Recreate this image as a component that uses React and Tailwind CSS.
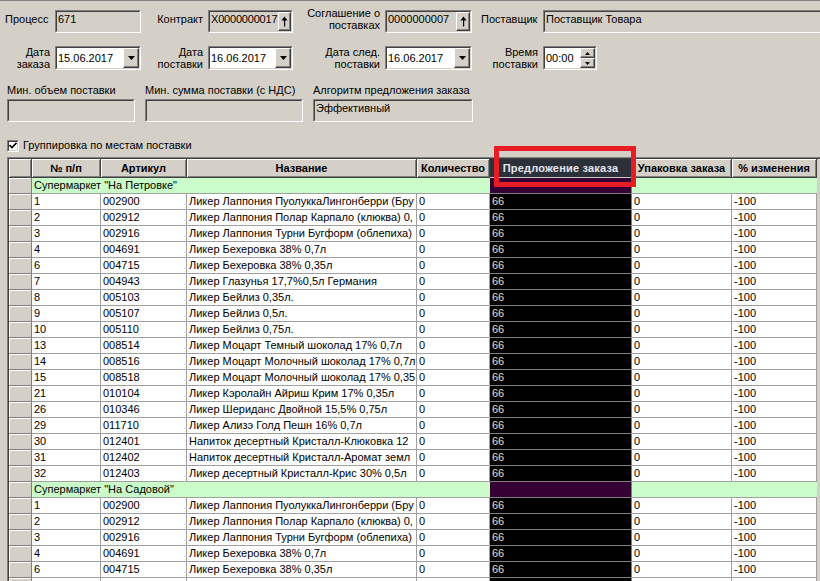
import React from "react";

const FONT = "font-['Liberation_Sans',Arial,sans-serif]";

const group1 = [
  ["1", "002900", "Ликер Лаппония ПуолуккаЛингонберри (Бру"],
  ["2", "002912", "Ликер Лаппония Полар Карпало (клюква) 0,"],
  ["3", "002916", "Ликер Лаппония Турни Бугформ (облепиха)"],
  ["4", "004691", "Ликер Бехеровка 38% 0,7л"],
  ["6", "004715", "Ликер Бехеровка 38% 0,35л"],
  ["7", "004943", "Ликер Глазунья 17,7%0,5л Германия"],
  ["8", "005103", "Ликер Бейлиз 0,35л."],
  ["9", "005107", "Ликер Бейлиз 0,5л."],
  ["10", "005110", "Ликер Бейлиз 0,75л."],
  ["13", "008514", "Ликер Моцарт Темный шоколад 17% 0,7л"],
  ["14", "008516", "Ликер Моцарт Молочный шоколад 17% 0,7л"],
  ["15", "008518", "Ликер Моцарт Молочный шоколад 17% 0,35"],
  ["21", "010104", "Ликер Кэролайн Айриш Крим 17% 0,35л"],
  ["26", "010346", "Ликер Шериданс Двойной 15,5% 0,75л"],
  ["29", "011710", "Ликер Ализэ Голд Пешн 16% 0,7л"],
  ["30", "012401", "Напиток десертный Кристалл-Клюковка 12"],
  ["31", "012402", "Напиток десертный Кристалл-Аромат земл"],
  ["32", "012403", "Ликер десертный Кристалл-Крис 30% 0,5л"],
];

const group2 = [
  ["1", "002900", "Ликер Лаппония ПуолуккаЛингонберри (Бру"],
  ["2", "002912", "Ликер Лаппония Полар Карпало (клюква) 0,"],
  ["3", "002916", "Ликер Лаппония Турни Бугформ (облепиха)"],
  ["4", "004691", "Ликер Бехеровка 38% 0,7л"],
  ["6", "004715", "Ликер Бехеровка 38% 0,35л"],
];

function Sunken({ className = "", inner = "", children }) {
  return (
    <div className={`shrink-0 border border-t-[#808080] border-l-[#808080] border-b-white border-r-white ${className}`}>
      <div className={`h-full border border-t-[#404040] border-l-[#404040] border-b-[#d4d0c8] border-r-[#d4d0c8] ${inner}`}>
        {children}
      </div>
    </div>
  );
}

function Raised({ className = "", children }) {
  return (
    <div className={`shrink-0 bg-[#d4d0c8] border border-t-white border-l-white border-b-[#404040] border-r-[#404040] shadow-[inset_-1px_-1px_0_#808080] flex items-center justify-center ${className}`}>
      {children}
    </div>
  );
}

function UpArrow() {
  return (
    <svg width="7" height="11" viewBox="0 0 7 11">
      <path d="M3.5 0.5 L0.5 4.5 L6.5 4.5 Z" fill="#000" />
      <rect x="3" y="4" width="1.2" height="6.5" fill="#000" />
    </svg>
  );
}

function DownTri() {
  return (
    <svg width="7" height="4" viewBox="0 0 7 4">
      <path d="M0 0 L7 0 L3.5 4 Z" fill="#000" />
    </svg>
  );
}

function Label2({ w, a, b }) {
  return (
    <div className={`${w} shrink-0 pr-[5px] text-right leading-[12px] self-start`}>
      <div>{a}</div>
      <div>{b}</div>
    </div>
  );
}

function Combo({ w, value }) {
  return (
    <Sunken className={`${w} h-[24px]`} inner="bg-white flex items-stretch">
      <div className="flex-1 pl-[1px] flex items-center leading-[13px]">{value}</div>
      <Raised className="w-[16px]">
        <DownTri />
      </Raised>
    </Sunken>
  );
}

function Spin({ w, value }) {
  return (
    <Sunken className={`${w} h-[24px]`} inner="bg-white flex items-stretch">
      <div className="flex-1 pl-[1px] flex items-center leading-[13px]">{value}</div>
      <div className="w-[15px] flex flex-col">
        <Raised className="flex-1">
          <svg width="5" height="3" viewBox="0 0 5 3">
            <path d="M2.5 0 L5 3 L0 3 Z" fill="#000" />
          </svg>
        </Raised>
        <Raised className="flex-1">
          <svg width="5" height="3" viewBox="0 0 5 3">
            <path d="M0 0 L5 0 L2.5 3 Z" fill="#000" />
          </svg>
        </Raised>
      </div>
    </Sunken>
  );
}

const COLS = ["w-[23px]", "w-[69px]", "w-[86px]", "w-[230px]", "w-[73px]", "w-[142px]", "w-[100px]", "w-[85px]"];

function HeadCell({ w, children }) {
  return (
    <div className={`${w} shrink-0 h-[19px] bg-[#d4d0c8] border-r border-b border-[#404040] shadow-[inset_1px_1px_0_#ffffff,inset_-1px_-1px_0_#808080] flex items-center justify-center font-bold whitespace-nowrap overflow-hidden`}>
      {children}
    </div>
  );
}

function Indicator() {
  return <div className="w-[23px] shrink-0 h-[16px] bg-[#d4d0c8] border-r border-b border-[#808080] shadow-[inset_1px_1px_0_#ffffff]" />;
}

function Cell({ w, children, dark = false }) {
  return (
    <div
      className={`${w} shrink-0 h-[16px] border-r border-b pl-[2px] leading-[15px] whitespace-nowrap overflow-hidden ${
        dark ? "bg-black text-[#f3dcc6] border-[#808080]" : "bg-white text-black border-[#a0a0a0]"
      }`}
    >
      {children}
    </div>
  );
}

function DataRow({ r }) {
  return (
    <div className="flex">
      <Indicator />
      <Cell w={COLS[1]}>{r[0]}</Cell>
      <Cell w={COLS[2]}>{r[1]}</Cell>
      <Cell w={COLS[3]}>{r[2]}</Cell>
      <Cell w={COLS[4]}>{r[3] ?? "0"}</Cell>
      <Cell w={COLS[5]} dark>{r[4] ?? "66"}</Cell>
      <Cell w={COLS[6]}>{r[5] ?? "0"}</Cell>
      <Cell w={COLS[7]}>{r[6] ?? "-100"}</Cell>
    </div>
  );
}

function GroupRow({ title }) {
  return (
    <div className="flex">
      <Indicator />
      <div className="w-[458px] shrink-0 h-[16px] bg-[#c9fcc9] border-b border-[#a0a0a0] pl-[2px] leading-[15px] whitespace-nowrap">
        {title}
      </div>
      <div className="w-[142px] shrink-0 h-[16px] bg-[#350033] border-b border-r border-[#808080]" />
      <div className="w-[185px] shrink-0 h-[16px] bg-[#c9fcc9] border-b border-[#a0a0a0]" />
    </div>
  );
}

export default function App() {
  return (
    <div className={`w-[820px] h-[581px] bg-[#d4d0c8] overflow-hidden relative border-t border-[#808080] text-[11px] text-black ${FONT}`}>
      {/* Row 1 */}
      <div className="flex mt-[9px] h-[23px]">
        <div className="w-[55px] shrink-0 pl-[5px] pt-[3px] leading-[13px]">Процесс</div>
        <Sunken className="w-[86px] h-[23px]" inner="bg-[#d4d0c8] pl-[1px] pt-[1px] leading-[13px]">
          671
        </Sunken>
        <div className="w-[67px] shrink-0 pr-[5px] pt-[3px] leading-[13px] text-right">Контракт</div>
        <Sunken className="w-[85px] h-[23px]" inner="bg-[#d4d0c8] flex items-stretch">
          <div className="flex-1 pl-[1px] pt-[1px] leading-[13px] whitespace-nowrap tracking-[-0.2px]">Х0000000017</div>
          <Raised className="w-[13px]">
            <UpArrow />
          </Raised>
        </Sunken>
        <div className="w-[92px] shrink-0 pr-[5px] text-right leading-[12px] -mt-[3px]">
          <div>Соглашение о</div>
          <div>поставках</div>
        </div>
        <Sunken className="w-[87px] h-[23px]" inner="bg-[#d4d0c8] flex items-stretch">
          <div className="flex-1 pl-[1px] pt-[1px] leading-[13px]">0000000007</div>
          <Raised className="w-[14px]">
            <UpArrow />
          </Raised>
        </Sunken>
        <div className="w-[71px] shrink-0 pl-[9px] pt-[3px] leading-[13px]">Поставщик</div>
        <Sunken className="w-[290px] h-[23px]" inner="bg-[#d4d0c8] pl-[1px] pt-[1px] leading-[13px] whitespace-nowrap">
          Поставщик Товара
        </Sunken>
      </div>

      {/* Row 2 */}
      <div className="flex mt-[13px] h-[24px]">
        <Label2 w="w-[55px]" a="Дата" b="заказа" />
        <Combo w="w-[86px]" value="15.06.2017" />
        <Label2 w="w-[67px]" a="Дата" b="поставки" />
        <Combo w="w-[85px]" value="16.06.2017" />
        <Label2 w="w-[92px]" a="Дата след." b="поставки" />
        <Combo w="w-[87px]" value="16.06.2017" />
        <Label2 w="w-[71px]" a="Время" b="поставки" />
        <Spin w="w-[54px]" value="00:00" />
      </div>

      {/* Row 3 */}
      <div className="flex mt-[14px] pl-[7px] gap-[10px]">
        <div className="w-[128px] shrink-0">
          <div className="h-[13px] leading-[13px] whitespace-nowrap">Мин. объем поставки</div>
          <Sunken className="mt-[2px] w-[128px] h-[23px]" inner="bg-[#d4d0c8]" />
        </div>
        <div className="w-[158px] shrink-0">
          <div className="h-[13px] leading-[13px] whitespace-nowrap">Мин. сумма поставки (с НДС)</div>
          <Sunken className="mt-[2px] w-[158px] h-[23px]" inner="bg-[#d4d0c8]" />
        </div>
        <div className="w-[160px] shrink-0">
          <div className="h-[13px] leading-[13px] whitespace-nowrap">Алгоритм предложения заказа</div>
          <Sunken className="mt-[2px] w-[160px] h-[23px]" inner="bg-[#d4d0c8] pl-[1px] pt-[1px] leading-[13px]">
            Эффективный
          </Sunken>
        </div>
      </div>

      {/* Checkbox */}
      <div className="flex items-center mt-[17px] h-[13px] pl-[7px]">
        <Sunken className="w-[12px] h-[12px]" inner="bg-white flex items-center justify-center">
          <svg width="8" height="7" viewBox="0 0 8 7">
            <path d="M0.5 3 L3 5.5 L7.5 0.8" stroke="#000" strokeWidth="1.6" fill="none" />
          </svg>
        </Sunken>
        <div className="ml-[4px] leading-[13px]">Группировка по местам поставки</div>
      </div>

      {/* Grid */}
      <div className="mt-[5px] ml-[7px] border-l border-t border-[#808080]">
        <div className="border-l border-t border-[#404040]">
          <div className="flex">
            <HeadCell w={COLS[0]} />
            <HeadCell w={COLS[1]}>№ п/п</HeadCell>
            <HeadCell w={COLS[2]}>Артикул</HeadCell>
            <HeadCell w={COLS[3]}>Название</HeadCell>
            <HeadCell w={COLS[4]}>Количество</HeadCell>
            <div className="w-[142px] shrink-0 h-[19px] bg-[#2c3038] border-r border-b border-r-[#404040] border-b-[#c8c8c8] flex items-center justify-center font-bold text-[#e6e6ee] tracking-[0.2px] whitespace-nowrap">
              Предложение заказа
            </div>
            <HeadCell w={COLS[6]}>Упаковка заказа</HeadCell>
            <HeadCell w={COLS[7]}>% изменения</HeadCell>
          </div>
          <GroupRow title={'Супермаркет "На Петровке"'} />
          {group1.map((r, i) => (
            <DataRow key={"a" + i} r={r} />
          ))}
          <GroupRow title={'Супермаркет "На Садовой"'} />
          {group2.map((r, i) => (
            <DataRow key={"b" + i} r={r} />
          ))}
          <DataRow r={["", "", "", "", "", "", ""]} />
        </div>
      </div>

      {/* Red highlight overlay */}
      <div className="absolute left-[494px] top-[145px] w-[142px] h-[41px] border-[5px] border-[#e81c24] pointer-events-none" />
    </div>
  );
}
